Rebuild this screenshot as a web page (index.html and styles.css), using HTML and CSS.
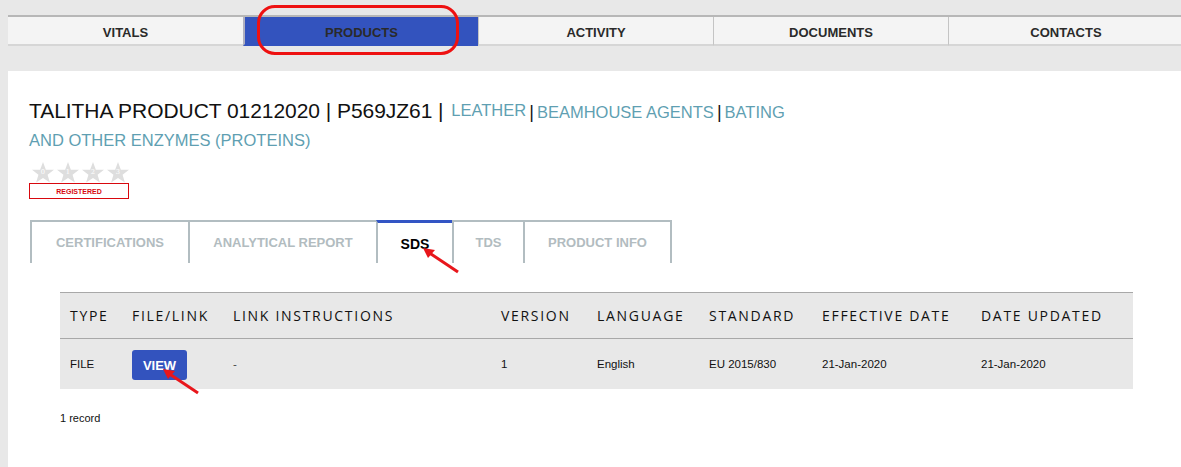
FILE: index.html
```html
<!DOCTYPE html>
<html>
<head>
<meta charset="utf-8">
<link rel="stylesheet" href="styles.css">
</head>
<body>
<nav class="topnav">
  <div class="navtab">VITALS</div>
  <div class="navtab active">PRODUCTS</div>
  <div class="navtab">ACTIVITY</div>
  <div class="navtab">DOCUMENTS</div>
  <div class="navtab">CONTACTS</div>
  <div class="annot-ring"></div>
</nav>
<main class="panel">
  <h1 class="title">
    <span class="name">TALITHA PRODUCT 01212020 | P569JZ61 |</span>
    <a class="cat raised">LEATHER</a><span class="sep">|</span><a class="cat">BEAMHOUSE AGENTS</a><span class="sep">|</span><a class="cat">BATING AND OTHER ENZYMES (PROTEINS)</a>
  </h1>
  <div class="stars">
    <svg class="star" viewBox="0 0 24 22"><polygon points="12,0 15,8 23.5,8.2 16.8,13.4 19.2,21.6 12,16.8 4.8,21.6 7.2,13.4 0.5,8.2 9,8"/><text x="12" y="13">0</text></svg>
    <svg class="star" viewBox="0 0 24 22"><polygon points="12,0 15,8 23.5,8.2 16.8,13.4 19.2,21.6 12,16.8 4.8,21.6 7.2,13.4 0.5,8.2 9,8"/><text x="12" y="13">1</text></svg>
    <svg class="star" viewBox="0 0 24 22"><polygon points="12,0 15,8 23.5,8.2 16.8,13.4 19.2,21.6 12,16.8 4.8,21.6 7.2,13.4 0.5,8.2 9,8"/><text x="12" y="13">2</text></svg>
    <svg class="star" viewBox="0 0 24 22"><polygon points="12,0 15,8 23.5,8.2 16.8,13.4 19.2,21.6 12,16.8 4.8,21.6 7.2,13.4 0.5,8.2 9,8"/><text x="12" y="13">3</text></svg>
  </div>
  <div class="registered">REGISTERED</div>
  <div class="subtabs">
    <div class="subtab w-cert">CERTIFICATIONS</div>
    <div class="subtab w-anal">ANALYTICAL REPORT</div>
    <div class="subtab w-sds active">SDS
      <svg class="arrow arrow-sds" width="40" height="30" viewBox="0 0 40 30"><line x1="36" y1="27" x2="6" y2="7" stroke="#e8161b" stroke-width="3"/><polygon points="1,3 13,5 6,13" fill="#e8161b"/></svg>
    </div>
    <div class="subtab w-tds">TDS</div>
    <div class="subtab w-info">PRODUCT INFO</div>
  </div>
  <div class="tablewrap">
    <div class="row head">
      <div class="c1">TYPE</div>
      <div class="c2">FILE/LINK</div>
      <div class="c3">LINK INSTRUCTIONS</div>
      <div class="c4">VERSION</div>
      <div class="c5">LANGUAGE</div>
      <div class="c6">STANDARD</div>
      <div class="c7">EFFECTIVE DATE</div>
      <div class="c8">DATE UPDATED</div>
    </div>
    <div class="row body">
      <div class="c1">FILE</div>
      <div class="c2"><span class="viewbtn">VIEW
        <svg class="arrow arrow-view" width="40" height="30" viewBox="0 0 40 30"><line x1="36" y1="27" x2="6" y2="7" stroke="#e8161b" stroke-width="3"/><polygon points="1,3 13,5 6,13" fill="#e8161b"/></svg>
      </span></div>
      <div class="c3 dash">-</div>
      <div class="c4">1</div>
      <div class="c5">English</div>
      <div class="c6">EU 2015/830</div>
      <div class="c7">21-Jan-2020</div>
      <div class="c8">21-Jan-2020</div>
    </div>
  </div>
  <div class="records">1 record</div>
</main>
</body>
</html>
```
FILE: styles.css
```css
* { box-sizing: border-box; }
html, body { margin: 0; padding: 0; }
body {
  background: #e8e8e8;
  font-family: "Liberation Sans", Arial, sans-serif;
  width: 1181px;
  height: 467px;
  overflow: hidden;
}
.topnav {
  position: relative;
  display: flex;
  margin: 15px 0 0 8px;
  border-top: 2px solid #b7b7b7;
  width: 1180px;
}
.navtab {
  width: 235px;
  height: 29px;
  padding-top: 3px;
  background: #f4f4f4;
  border-left: 1px solid #c4c4c4;
  border-bottom: 2px solid #d6d6d6;
  font-weight: bold;
  font-size: 13px;
  color: #2a2a2a;
  display: flex;
  align-items: center;
  justify-content: center;
}
.navtab:first-child { border-left: none; }
.navtab.active {
  background: #3353be;
  border-left: 2px solid #b0b0c0;
  border-bottom-color: #3353be;
}
.annot-ring {
  position: absolute;
  left: 249px;
  top: -12px;
  width: 202px;
  height: 50px;
  border: 3px solid #ee1111;
  border-radius: 18px;
}
.panel {
  background: #fff;
  margin: 25px 0 0 8px;
  padding: 26px 0 0 21px;
  height: 400px;
}
.title {
  margin: 0;
  width: 790px;
  font-weight: normal;
  font-size: 21px;
  line-height: 28px;
  color: #111;
}
.name { margin-right: 2px; letter-spacing: -0.05px; }
.cat {
  font-size: 16.5px;
  line-height: 16px;
  color: #5f9fb2;
}
.cat.raised { position: relative; top: -2px; }
.sep {
  font-size: 18px;
  line-height: 16px;
  color: #111;
  margin: 0 3px 0 3px;
}
.stars {
  display: flex;
  gap: 1px;
  margin: 9px 0 0 2px;
  height: 21px;
}
.star { width: 24px; height: 21px; }
.star polygon { fill: #dedede; }
.star text {
  fill: #fff;
  font-size: 7px;
  text-anchor: middle;
  font-family: "DejaVu Serif", serif;
}
.registered {
  width: 100px;
  height: 16px;
  border: 1px solid #d8080e;
  color: #d8080e;
  font-weight: bold;
  font-size: 7px;
  display: flex;
  align-items: center;
  justify-content: center;
}
.subtabs {
  display: flex;
  margin: 21px 0 0 1px;
}
.subtab {
  position: relative;
  height: 43px;
  border-top: 2px solid #b2bdc1;
  border-left: 2px solid #b2bdc1;
  color: #b2bcc0;
  font-weight: bold;
  font-size: 13px;
  display: flex;
  align-items: center;
  justify-content: center;
  padding-top: 0;
}
.subtab.w-info { border-right: 2px solid #b2bdc1; }
.w-cert { width: 158px; }
.w-anal { width: 188px; }
.w-sds { width: 76px; }
.w-tds { width: 71px; }
.w-info { width: 149px; }
.subtab.active {
  border-top: 3px solid #3355c4;
  color: #000;
  font-size: 14px;
  padding-top: 2px;
}
.arrow { position: absolute; }
.arrow-sds { left: 44px; top: 22px; }
.arrow-view { left: 30px; top: 16px; }
.tablewrap {
  margin: 29px 0 0 31px;
  width: 1073px;
  background: #e8e8e8;
  border-top: 1px solid #a8a8a8;
}
.row { display: flex; }
.row > div { padding-left: 10px; display: flex; align-items: center; }
.head {
  height: 46px;
  border-bottom: 1px solid #a8a8a8;
  font-family: "Open Sans", sans-serif;
  font-size: 14px;
  letter-spacing: 1.7px;
  color: #111;
}
.body {
  height: 50px;
  font-size: 11.5px;
  color: #111;
}
.c1 { width: 62px; }
.c2 { width: 101px; }
.c3 { width: 268px; }
.c4 { width: 96px; }
.c5 { width: 112px; }
.c6 { width: 113px; }
.c7 { width: 159px; }
.c8 { width: 162px; }
.dash { color: #444; }
.viewbtn {
  position: relative;
  width: 55px;
  height: 30px;
  background: #3353be;
  border-radius: 3px;
  color: #fff;
  font-weight: bold;
  font-size: 13px;
  letter-spacing: 0;
  display: flex;
  align-items: center;
  justify-content: center;
  margin-top: 2px;
}
.records {
  margin: 23px 0 0 31px;
  font-size: 11px;
  color: #111;
}
```
